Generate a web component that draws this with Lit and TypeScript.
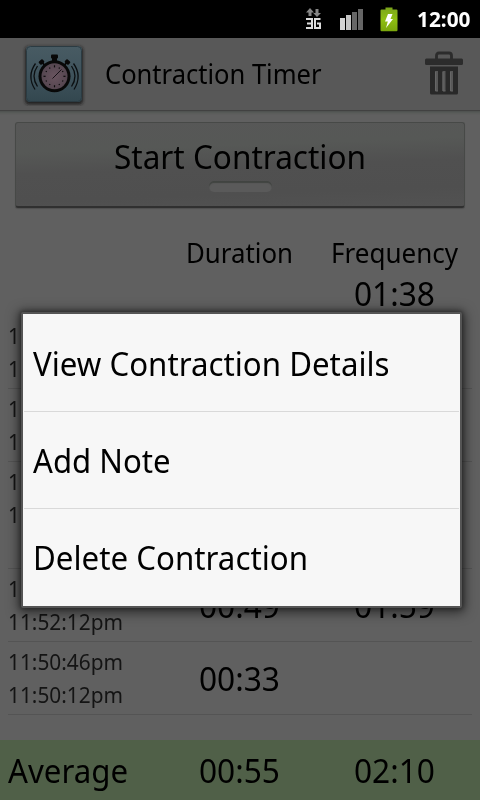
import { LitElement, html, css, svg } from "lit";
import { customElement, property } from "lit/decorators.js";

/** A single line of text condensed or stretched to a given advance width. */
@customElement("fit-text")
class FitText extends LitElement {
  @property({ type: Number }) w = 100;

  static styles = css`
    :host { display: block; white-space: nowrap; flex: none; }
    .line { display: inline-block; transform-origin: 0 50%; }
  `;

  firstUpdated() {
    const line = this.renderRoot.querySelector(".line") as HTMLElement;
    this.style.width = this.w + "px";
    const natural = line.getBoundingClientRect().width;
    if (natural > 0) line.style.transform = `scaleX(${this.w / natural})`;
  }

  render() {
    return html`<span class="line"><slot></slot></span>`;
  }
}

interface Row {
  start: string;
  end: string;
  duration: string;
  frequency: string;
  noted?: boolean;
}

const ROWS: Row[] = [
  { start: "11:59:10pm", end: "11:58:12pm", duration: "00:58", frequency: "02:15" },
  { start: "11:57:45pm", end: "11:56:40pm", duration: "01:05", frequency: "02:20" },
  { start: "11:55:30pm", end: "11:54:11pm", duration: "01:02", frequency: "01:59", noted: true },
  { start: "11:53:01pm", end: "11:52:12pm", duration: "00:49", frequency: "01:59" },
  { start: "11:50:46pm", end: "11:50:12pm", duration: "00:33", frequency: "" },
];

const MENU = [
  { label: "View Contraction Details", w: 356.5 },
  { label: "Add Note", w: 137.5 },
  { label: "Delete Contraction", w: 275 },
];

const networkIcon = html`<svg class="net" width="16" height="22" viewBox="0 0 16 22">
  <path d="M4 0L8 4.5H5.5V8H2.5V4.5H0Z" fill="#858585"/>
  <path d="M11 9L7.2 5H9.5V1H12.5V5H15Z" fill="#858585"/>
  <path d="M0 11H6V20H0M1 15.500H6M14.500 11H9V20H14V15.500H11" fill="none" stroke="#dcdcdc" stroke-width="2"/>
</svg>`;

const signalIcon = html`<svg class="signal" width="24" height="22" viewBox="0 0 24 22">
  <rect x="0" y="10" width="5" height="12" fill="#d4d4d4"/>
  <rect x="6" y="7" width="5" height="15" fill="#c4c4c4"/>
  <rect x="12" y="4" width="5" height="18" fill="#666"/>
  <rect x="18" y="1" width="5" height="21" fill="#666"/>
</svg>`;

const batteryIcon = html`<svg class="battery" width="18" height="25" viewBox="0 0 18 25">
  <defs><linearGradient id="g" x2="0" y2="1"><stop offset="0" stop-color="#7ba51a"/><stop offset=".5" stop-color="#8fbf13"/><stop offset="1" stop-color="#7aa60c"/></linearGradient></defs>
  <path d="M5.500 0.500H12.500V2.500H16.500Q17.500 2.500 17.500 3.500V23Q17.500 24.200 16.500 24.200H1.500Q0.500 24.200 0.500 23V3.500Q0.500 2.500 1.500 2.500H5.500Z" fill="url(#g)"/>
  <path d="M8 7H12.500L10.500 12H13L6 21L7.800 14.500H5Z" fill="#fff"/>
</svg>`;

const appIcon = html`<svg class="logo" width="64" height="64" viewBox="0 0 64 64">
  <defs>
    <linearGradient id="t" x2="0" y2="1"><stop offset="0" stop-color="#485b63"/><stop offset=".5" stop-color="#3f535c"/><stop offset="1" stop-color="#33474f"/></linearGradient>
    <radialGradient id="f"><stop offset="0" stop-color="#69545f"/><stop offset="1" stop-color="#554650"/></radialGradient>
    <filter id="s" x="-20%" y="-20%" width="140%" height="140%"><feGaussianBlur stdDeviation="1.5"/></filter>
  </defs>
  <rect x="3" y="4.500" width="58" height="58" rx="4" fill="#151515" opacity=".85" filter="url(#s)"/>
  <rect x="4" y="4" width="56" height="56" rx="4" fill="url(#t)"/>
  <rect x="4.500" y="4.500" width="55" height="55" rx="4" fill="none" stroke="#2b3b42"/>
  <g fill="#080808">
    <rect x="29" y="12.500" width="7" height="4" rx="1"/>
    <rect x="30" y="15" width="5" height="6"/>
    <rect x="-2.500" y="-2" width="5" height="4" rx="1" transform="translate(19.500 20) rotate(-42)"/>
    <rect x="-2.500" y="-2" width="5" height="4" rx="1" transform="translate(45.500 20) rotate(42)"/>
    <path d="M20 20L24 25M45 20L41 25" stroke="#080808" stroke-width="2"/>
    <circle cx="32.500" cy="34.300" r="16"/>
  </g>
  <circle cx="32.500" cy="34.300" r="13" fill="url(#f)"/>
  ${Array.from({ length: 12 }, (_, i) => svg`<path d="M32.500 ${i % 3 ? 24.2 : 23.3}V25.400" stroke="#0a0a0a" stroke-width="1.200" transform="rotate(${i * 30} 32.500 34.300)"/>`)}
  <path d="M30.500 36.500L39.500 27.500" stroke="#161016" stroke-width="1"/>
  <g fill="none" stroke="#0b0f11" stroke-width="1.300">
    <path d="M13.500 21.500Q4.500 34 13 47.500M15.500 24Q8.500 34 15.500 44.500"/>
    <path d="M51.500 21.500Q60.500 34 52 47.500M49.500 24Q56.500 34 49.500 44.500"/>
  </g>
</svg>`;

const trashIcon = html`<svg class="trash" width="38" height="44" viewBox="0 0 38 44">
  <path d="M11.500 8V4.500Q11.500 2 14 2H24Q26.500 2 26.500 4.500V8" fill="none" stroke="#2c2c2c" stroke-width="2.800"/>
  <rect x="0" y="7.500" width="38" height="6.500" rx="1.500" fill="#2c2c2c"/>
  <path fill-rule="evenodd" fill="#292929" d="M5 15.500H33V42Q33 43.500 31.500 43.500H6.500Q5 43.500 5 42ZM10 20V40H13V20ZM17.500 20V40H20.500V20ZM25 20V40H28V20Z"/>
  <path d="M10.500 21V40H13M18 21V40H20.500M25.500 21V40H28" fill="none" stroke="#666" stroke-width="1"/>
</svg>`;

@customElement("app-root")
class AppRoot extends LitElement {
  static styles = css`
    :host {
      display: block; position: relative; width: 480px; height: 800px; overflow: hidden;
      background: #606060; color: #000; font-family: "Noto Sans", "Open Sans", sans-serif;
    }
    svg { display: block; flex: none; }
    .screen { display: flex; flex-direction: column; height: 800px; }
    .status { height: 38px; flex: none; background: #000; color: #fff; display: flex; box-sizing: border-box; padding: 0 9px 0 306px; }
    .net { margin-top: 8px; }
    .signal { margin: 8px 0 0 18px; }
    .battery { margin: 7px 0 0 16px; }
    .clock { margin-left: 19px; font-weight: 700; font-size: 21px; line-height: 38px; }
    .bar {
      height: 72px; flex: none; box-sizing: border-box; display: flex; padding: 0 17px 0 22px; background: #585858;
      box-shadow: 0 1px 0 #414141, 0 2px 0 #505351, 0 3px 0 #565957, 0 4px 1px #5b5d5b; z-index: 1;
    }
    .logo { margin-top: 4px; }
    .title { margin-left: 19px; font-size: 27px; line-height: 71px; flex: 1; }
    .trash { margin-top: 13px; }
    .start {
      margin: 12px 15px 0; height: 86px; flex: none; box-sizing: border-box; border: 1px solid #474947; border-bottom: 2px solid #303030; border-radius: 3px;
      background: linear-gradient(178deg, #575757 0%, #565856 30%, #505050 52%, #4f4f4f 80%, #525252 100%);
      box-shadow: 0 1px 1px #505050; display: flex; flex-direction: column; align-items: center; font-size: 33px; line-height: 68px;
    }
    .light { width: 63px; height: 11px; margin-top: -10px; border-radius: 5px; background: #5a5a5a; box-shadow: inset 0 2px 1px #414441; }
    .cols { display: grid; grid-template-columns: repeat(3, 1fr); padding: 0 8px; flex: none; align-items: center; }
    .cols > * { justify-self: center; }
    .cols > .first { justify-self: start; }
    .heads { margin-top: 31px; height: 27px; font-size: 27px; line-height: 27px; }
    .current { height: 50px; font-size: 33px; line-height: 56px; align-items: start; }
    .list { flex: 1; }
    .row { height: 72px; margin: 0 8px; padding: 0; border-bottom: 1px solid #545454; font-size: 33px; }
    .noted { height: 106px; align-items: start; }
    .noted .time { line-height: 72px; }
    .stamps { font-size: 21px; line-height: 33px; color: #141414; padding-top: 2px; }
    .noted .stamps { padding-top: 4px; }
    .average { height: 60px; background: #506048; font-size: 33px; line-height: 62px; }
    .menu {
      position: absolute; left: 21px; top: 312px; width: 437px; background: #f7f7f7; border: 2px solid #555; border-radius: 2px;
      box-shadow: 0 2px 12px 3px rgba(0, 0, 0, .5), 0 0 4px 1px rgba(0, 0, 0, .35);
    }
    .item { height: 96px; margin: 0 1px; padding-left: 9px; line-height: 97px; font-size: 33px; border-bottom: 1px solid #d9d9d9; }
    .item:first-child { height: 97px; line-height: 99px; }
    .item:last-child { border: 0; height: 97px; }
  `;

  render() {
    return html`
      <div class="screen">
        <div class="status">
          ${networkIcon}${signalIcon}${batteryIcon}
          <fit-text class="clock" .w=${53.5}>12:00</fit-text>
        </div>
        <div class="bar">
          ${appIcon}
          <fit-text class="title" .w=${216.5}>Contraction Timer</fit-text>
          ${trashIcon}
        </div>
        <div class="start">
          <fit-text .w=${252}>Start Contraction</fit-text>
          <div class="light"></div>
        </div>
        <div class="cols heads">
          <span></span>
          <fit-text .w=${107}>Duration</fit-text>
          <fit-text .w=${127}>Frequency</fit-text>
        </div>
        <div class="cols current">
          <span></span><span></span>
          <fit-text .w=${81}>01:38</fit-text>
        </div>
        <div class="list">
          ${ROWS.map(
            (r) => html`<div class="cols row ${r.noted ? "noted" : ""}">
              <div class="stamps first">
                <fit-text .w=${115}>${r.start}</fit-text>
                <fit-text .w=${115}>${r.end}</fit-text>
              </div>
              <fit-text class="time" .w=${81}>${r.duration}</fit-text>
              ${r.frequency ? html`<fit-text class="time" .w=${81}>${r.frequency}</fit-text>` : html`<span></span>`}
            </div>`
          )}
        </div>
        <div class="cols average">
          <fit-text class="first" .w=${120}>Average</fit-text>
          <fit-text .w=${81}>00:55</fit-text>
          <fit-text .w=${81}>02:10</fit-text>
        </div>
      </div>
      <div class="menu">
        ${MENU.map((m) => html`<div class="item"><fit-text .w=${m.w}>${m.label}</fit-text></div>`)}
      </div>
    `;
  }
}
